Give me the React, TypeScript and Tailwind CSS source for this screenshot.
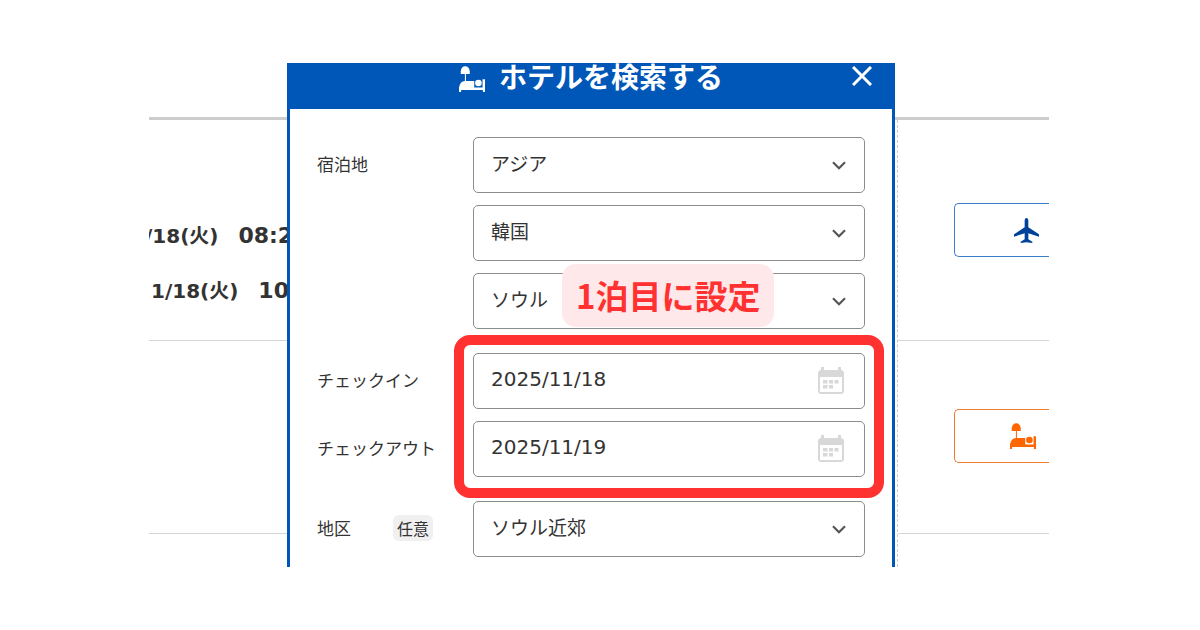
import type { ReactNode, SVGProps } from "react";

function BedIcon(props: SVGProps<SVGSVGElement>) {
  return (
    <svg viewBox="0 0 75 75" fill="currentColor" aria-hidden="true" {...props}>
      <path d="M5 23V15C6 5 11 1 18 1S30 5 31 15V23Z" />
      <path d="M17 23H20V43H17Z" />
      <path d="M0 75V61C3 49 8 43 17 43H44V62H68V38H75V75H69V69H6V75Z" />
      <circle cx="56" cy="49" r="9.5" />
    </svg>
  );
}

function PlaneIcon(props: SVGProps<SVGSVGElement>) {
  return (
    <svg viewBox="0 0 75 75" fill="currentColor" aria-hidden="true" {...props}>
      <path d="M32 8C32 3 34 0 37.500 0S43 3 43 8V28L75 49V56L43 46V64L55 71V75L37.500 73L20 75V71L32 64V46L0 56V49L32 28Z" />
    </svg>
  );
}

function CalendarIcon(props: SVGProps<SVGSVGElement>) {
  return (
    <svg viewBox="0 0 26 27" fill="currentColor" aria-hidden="true" {...props}>
      <path
        d="M3 0H6V3H20V0H23V3H24L26 5V25L24 27H2L0 25V5L2 3H3ZM2 10V25H24V10Z"
        fillRule="evenodd"
      />
      <path d="M5 13H9.500V16.500H5ZM11 13H15V16.500H11ZM16.500 13H20.500V16.500H16.500ZM5 18H9.500V21.500H5ZM11 18H15V21.500H11Z" />
    </svg>
  );
}

function ChevronIcon(props: SVGProps<SVGSVGElement>) {
  return (
    <svg viewBox="0 0 14 9" fill="none" stroke="currentColor" strokeWidth="2.2" aria-hidden="true" {...props}>
      <path d="M1 1.200L7 7.200L13 1.200" />
    </svg>
  );
}

const fieldClass =
  "block h-14 w-full appearance-none rounded-[5px] border border-[#8c8c8c] bg-white pb-1 pl-[17px] text-[#333]";

function SelectField({ id, label, value, children }: { id: string; label?: string; value: string; children?: ReactNode }) {
  return (
    <div className="relative">
      <select id={id} aria-label={label} defaultValue={value} className={`${fieldClass} pr-12 text-[19px]`}>
        <option>{value}</option>
      </select>
      <ChevronIcon className="pointer-events-none absolute top-6 right-[19px] h-[9px] w-[14px] text-[#555]" />
      {children}
    </div>
  );
}

function DateField({ id, value }: { id: string; value: string }) {
  return (
    <div className="relative">
      <input
        id={id}
        type="text"
        defaultValue={value}
        className={`${fieldClass} pr-14 font-['DejaVu_Sans','Noto_Sans_CJK_JP',sans-serif] text-[20px]`}
      />
      <CalendarIcon className="pointer-events-none absolute top-[14px] right-[21px] h-[27px] w-[26px] text-[#d8d8d8]" />
    </div>
  );
}

function Flight({ date, time }: { date: string; time: string }) {
  return (
    <p className="flex items-center gap-5 leading-7 font-bold whitespace-nowrap text-[#333]">
      <span className="text-[20px]">{date}</span>
      <span className="text-[22px]">{time}</span>
    </p>
  );
}

export default function App() {
  return (
    <main className="my-[63px] mr-[151px] ml-[149px] grid grid-cols-[138px_minmax(0,1fr)_154px] bg-white font-['Noto_Sans_CJK_JP',sans-serif] text-[#333]">
      <section className="flex flex-col overflow-hidden pt-[54px]">
        <div className="h-[3px] bg-[#cdcdcd]" />
        <div className="flex h-[221px] flex-col gap-[27px] border-b border-[#d5d5d5] pt-[102px] font-['DejaVu_Sans','Noto_Sans_CJK_JP',sans-serif]">
          <div className="-ml-1">
            <Flight date="/18(火)" time="08:2" />
          </div>
          <div className="pl-0.5">
            <Flight date="1/18(火)" time="10" />
          </div>
        </div>
        <div className="h-[193px] border-b border-[#d5d5d5]" />
      </section>

      <section role="dialog" aria-labelledby="dialog-title" className="border-x-[3px] border-[#0057b8]">
        <header className="grid grid-cols-[1fr_auto_1fr] items-start bg-[#0057b8] pb-[17px] text-white">
          <span />
          <div className="flex items-start gap-[14px]">
            <BedIcon className="mt-[3px] size-[26px]" />
            <h2 id="dialog-title" className="text-[28px] leading-[26px] font-bold">
              ホテルを検索する
            </h2>
          </div>
          <button type="button" aria-label="閉じる" className="mt-[3px] mr-5 justify-self-end">
            <svg viewBox="0 0 20 20" fill="none" stroke="currentColor" strokeWidth="3" className="size-5" aria-hidden="true">
              <path d="M1 1L19 19M19 1L1 19" />
            </svg>
          </button>
        </header>

        <form className="flex flex-col gap-6 px-[27px] pt-7 pb-[10px] text-[17px]">
          <div className="grid grid-cols-[156px_minmax(0,1fr)]">
            <label htmlFor="region" className="flex h-14 items-center pb-0.5">
              宿泊地
            </label>
            <div className="flex flex-col gap-3">
              <SelectField id="region" value="アジア" />
              <SelectField id="country" label="国" value="韓国" />
              <SelectField id="city" label="都市" value="ソウル">
                <div className="absolute -top-[9px] left-[89px] rounded-[14px] bg-[#ffe8e9] px-[14px] py-2 text-[33px] leading-[47px] font-bold whitespace-nowrap text-[#ff3131]">
                  1泊目に設定
                </div>
              </SelectField>
            </div>
          </div>

          <div className="grid grid-cols-[156px_minmax(0,1fr)]">
            <div className="flex flex-col gap-3">
              <label htmlFor="checkin" className="flex h-14 items-center pb-0.5">
                チェックイン
              </label>
              <label htmlFor="checkout" className="flex h-14 items-center pb-0.5">
                チェックアウト
              </label>
            </div>
            <div className="relative flex flex-col gap-3">
              <DateField id="checkin" value="2025/11/18" />
              <DateField id="checkout" value="2025/11/19" />
              <div className="pointer-events-none absolute -inset-x-[19px] -top-[18px] -bottom-[21px] rounded-2xl border-[10px] border-[#ff3131]" />
            </div>
          </div>

          <div className="grid grid-cols-[156px_minmax(0,1fr)]">
            <div className="flex h-14 items-center justify-between pr-10 pb-0.5">
              <label htmlFor="district">地区</label>
              <span className="rounded-md bg-[#f0f0f0] px-1 text-[16px] leading-[26px]">任意</span>
            </div>
            <SelectField id="district" value="ソウル近郊" />
          </div>
        </form>
      </section>

      <section className="flex flex-col overflow-hidden pt-[54px]">
        <div className="h-[3px] bg-[#cdcdcd]" />
        <div className="ml-[2px] flex grow flex-col border-l border-dashed border-[#ccc]">
          <div className="h-[221px] border-b border-[#d5d5d5] pt-[83px] pl-14">
            <button
              type="button"
              aria-label="航空券"
              className="flex h-[54px] w-full items-center rounded-l-[5px] border border-r-0 border-[#3a7cc6] bg-white pl-[59px] text-[#00419a]"
            >
              <PlaneIcon className="size-[25px]" />
            </button>
          </div>
          <div className="h-[193px] border-b border-[#d5d5d5] pt-[68px] pl-14">
            <button
              type="button"
              aria-label="ホテル"
              className="flex h-[54px] w-full items-center rounded-l-[5px] border border-r-0 border-[#ee7a30] bg-white pl-[55px] text-[#ff6600]"
            >
              <BedIcon className="size-[26px]" />
            </button>
          </div>
        </div>
      </section>
    </main>
  );
}
